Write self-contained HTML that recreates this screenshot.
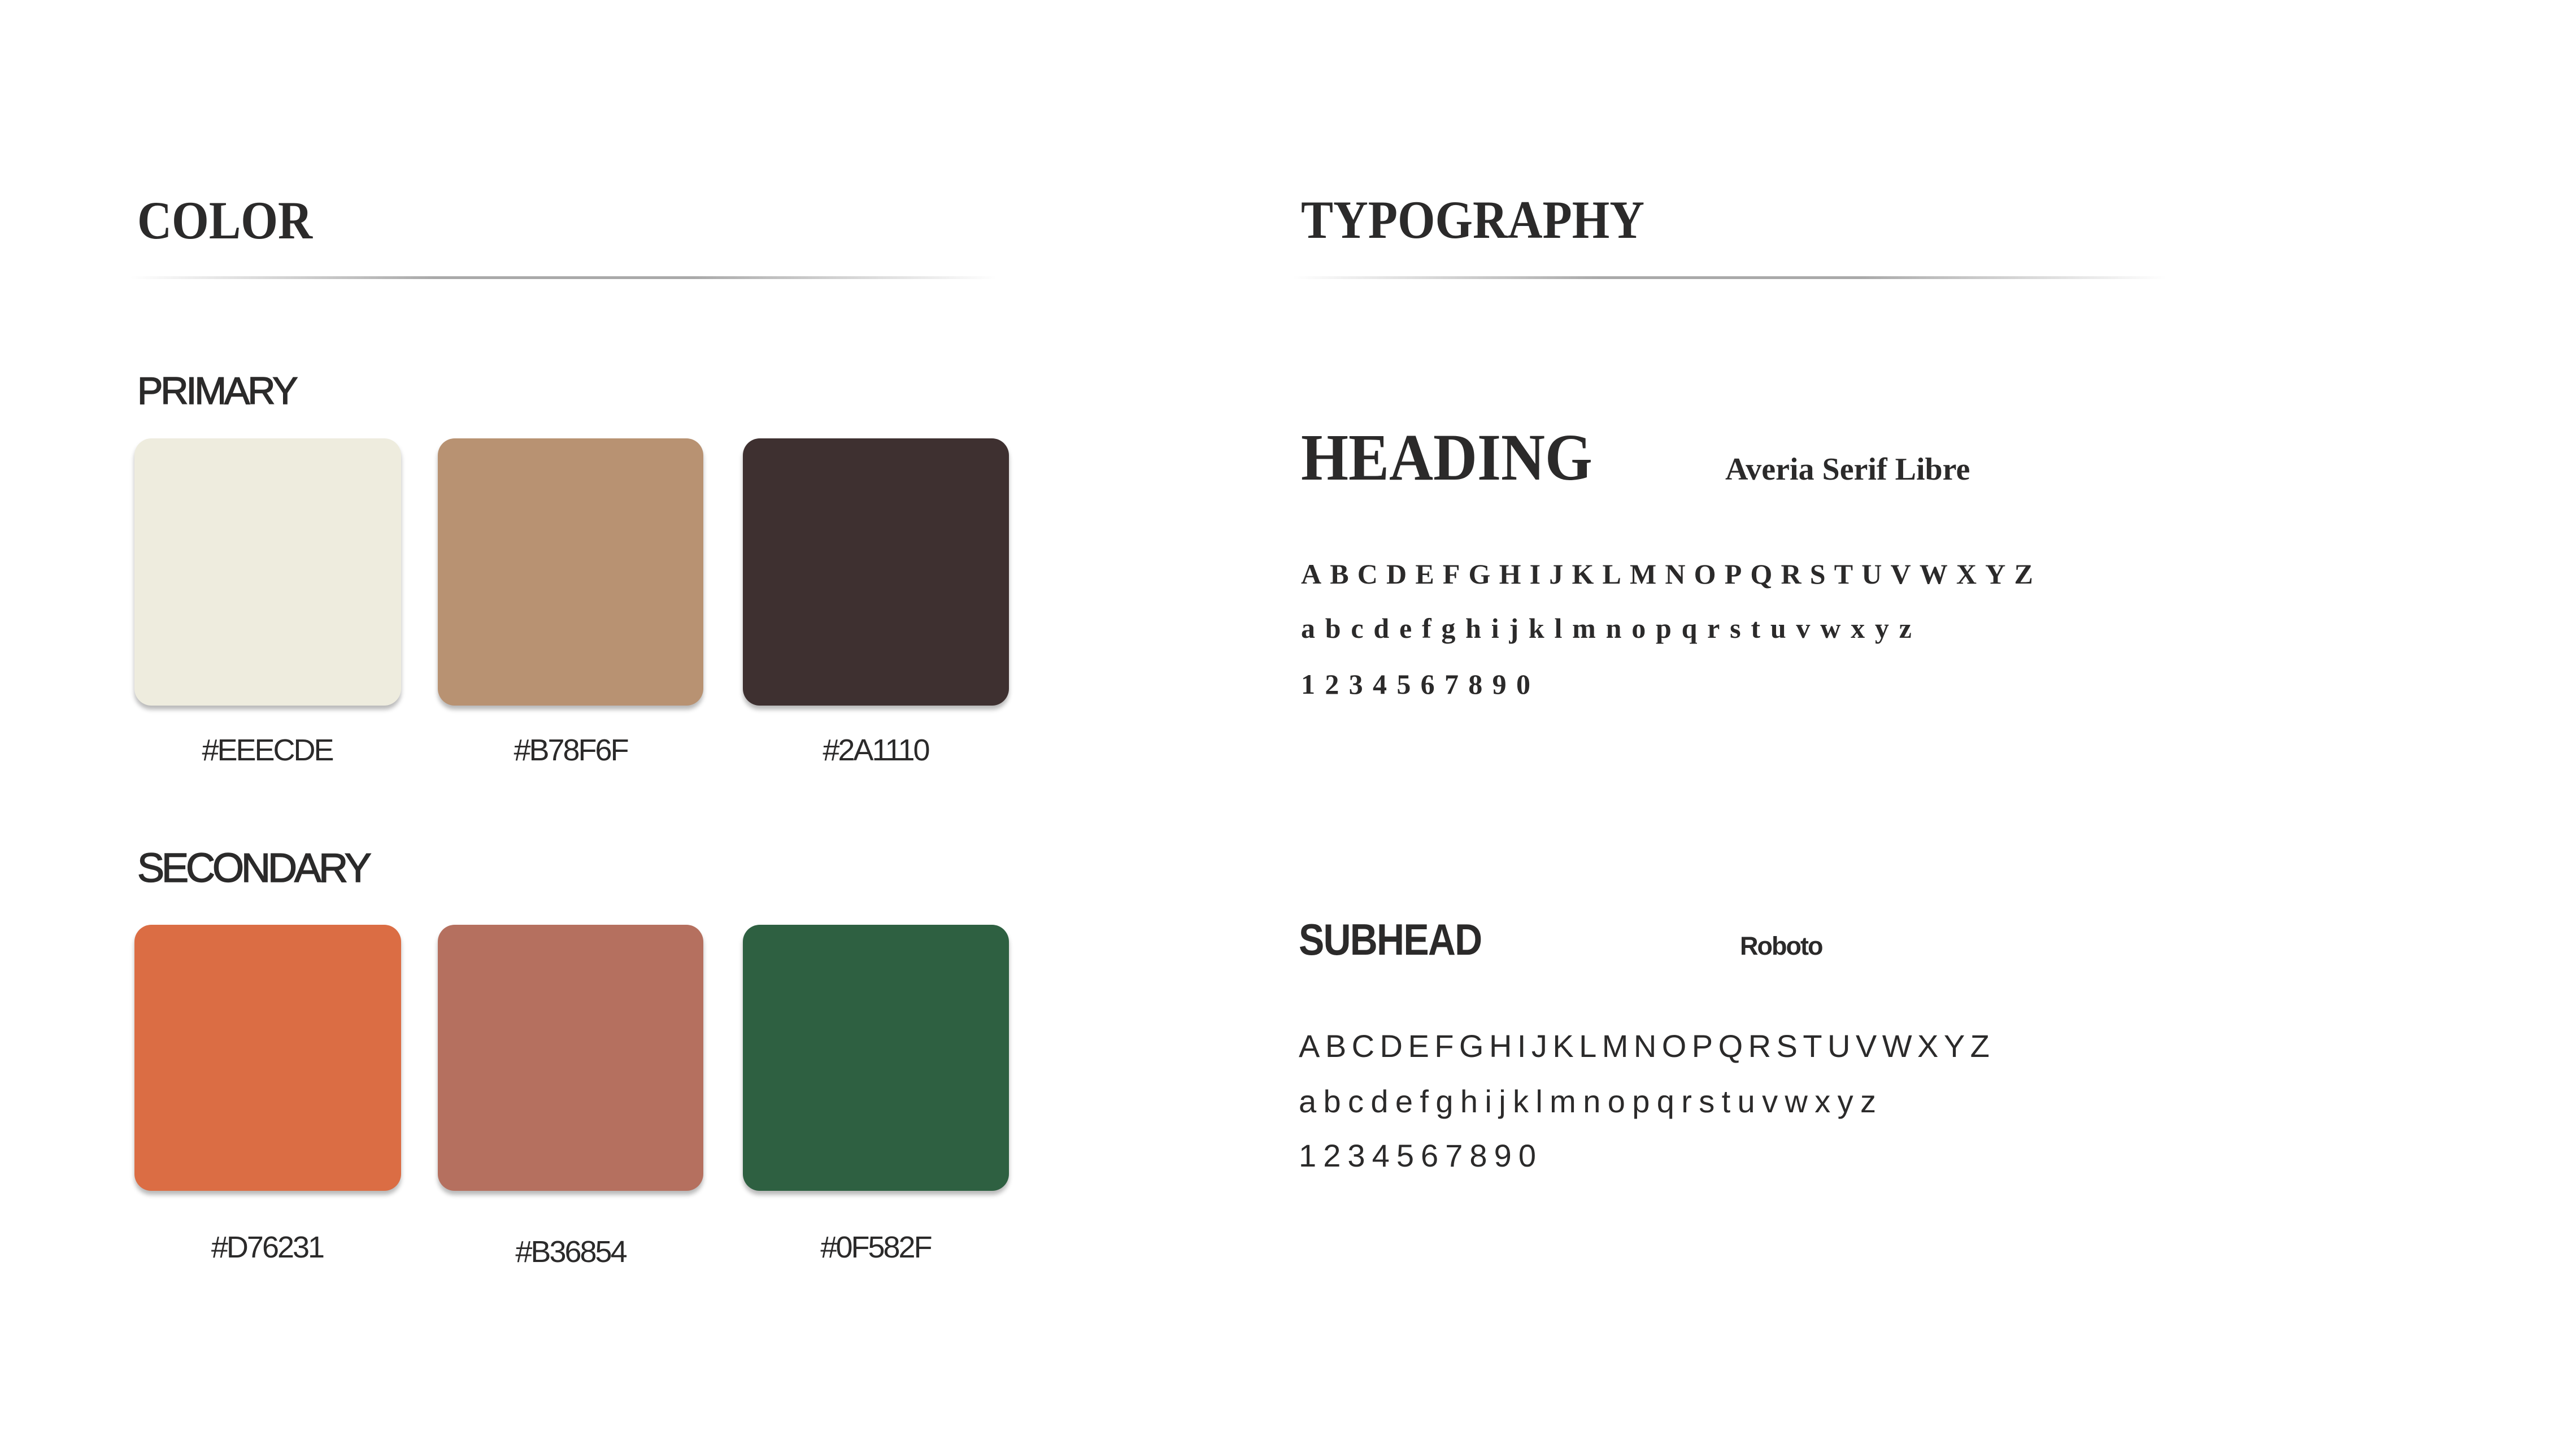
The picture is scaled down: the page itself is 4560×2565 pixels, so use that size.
<!DOCTYPE html>
<html><head><meta charset="utf-8"><style>
*{margin:0;padding:0;box-sizing:border-box}
body{width:4560px;height:2565px;background:#fff;position:relative;overflow:hidden;color:#2b2a2a}
.a{position:absolute;white-space:nowrap;line-height:1}
.serif{font-family:"Liberation Serif",serif}
.sans{font-family:"Liberation Sans",sans-serif}
.sw{position:absolute;border-radius:30px;box-shadow:0 7px 8px rgba(0,0,0,.28)}
.line{position:absolute;height:5px;background:linear-gradient(90deg,rgba(170,170,170,0),#a9a9a9 35%,#a9a9a9 65%,rgba(170,170,170,0));border-radius:3px}
.row{position:absolute;display:flex;justify-content:space-between;line-height:1;white-space:nowrap}
.lbl{position:absolute;width:474px;text-align:center;font-family:"Liberation Sans",sans-serif;font-size:54px;line-height:1;letter-spacing:-3px}
</style></head><body>

<div class="a serif" style="left:243px;top:343px;font-size:95px;font-weight:bold;transform:scaleX(.89);transform-origin:left">COLOR</div>
<div class="line" style="left:230px;top:489px;width:1535px"></div>
<div class="a sans" style="left:243px;top:658px;font-size:68px;letter-spacing:-4px;-webkit-text-stroke:1.5px #2b2a2a">PRIMARY</div>

<div class="sw" style="left:238px;top:776px;width:472px;height:473px;background:#EEECDE"></div>
<div class="sw" style="left:775px;top:776px;width:470px;height:473px;background:#B89272"></div>
<div class="sw" style="left:1315px;top:776px;width:471px;height:473px;background:#3E3030"></div>
<div class="lbl" style="left:236px;top:1301px">#EEECDE</div>
<div class="lbl" style="left:773px;top:1301px">#B78F6F</div>
<div class="lbl" style="left:1313px;top:1301px">#2A1110</div>

<div class="a sans" style="left:243px;top:1501px;font-size:72px;letter-spacing:-5px;-webkit-text-stroke:1.5px #2b2a2a">SECONDARY</div>
<div class="sw" style="left:238px;top:1637px;width:472px;height:471px;background:#DB6D44"></div>
<div class="sw" style="left:775px;top:1637px;width:470px;height:471px;background:#B5705F"></div>
<div class="sw" style="left:1315px;top:1637px;width:471px;height:471px;background:#2E6041"></div>
<div class="lbl" style="left:236px;top:2181px">#D76231</div>
<div class="lbl" style="left:773px;top:2189px">#B36854</div>
<div class="lbl" style="left:1313px;top:2181px">#0F582F</div>

<div class="a serif" style="left:2303px;top:342px;font-size:95px;font-weight:bold;transform:scaleX(.9);transform-origin:left">TYPOGRAPHY</div>
<div class="line" style="left:2288px;top:489px;width:1547px"></div>

<div class="a serif" style="left:2303px;top:751px;font-size:118px;font-weight:bold;transform:scaleX(.915);transform-origin:left">HEADING</div>
<div class="a serif" style="left:3054px;top:803px;font-size:56px;font-weight:bold">Averia Serif Libre</div>

<div class="row serif" style="left:2303px;top:991px;width:1296px;font-size:50px;font-weight:bold"><span>A</span><span>B</span><span>C</span><span>D</span><span>E</span><span>F</span><span>G</span><span>H</span><span>I</span><span>J</span><span>K</span><span>L</span><span>M</span><span>N</span><span>O</span><span>P</span><span>Q</span><span>R</span><span>S</span><span>T</span><span>U</span><span>V</span><span>W</span><span>X</span><span>Y</span><span>Z</span></div>
<div class="row serif" style="left:2303px;top:1087px;width:1081px;font-size:50px;font-weight:bold"><span>a</span><span>b</span><span>c</span><span>d</span><span>e</span><span>f</span><span>g</span><span>h</span><span>i</span><span>j</span><span>k</span><span>l</span><span>m</span><span>n</span><span>o</span><span>p</span><span>q</span><span>r</span><span>s</span><span>t</span><span>u</span><span>v</span><span>w</span><span>x</span><span>y</span><span>z</span></div>
<div class="row serif" style="left:2303px;top:1186px;width:406px;font-size:50px;font-weight:bold"><span>1</span><span>2</span><span>3</span><span>4</span><span>5</span><span>6</span><span>7</span><span>8</span><span>9</span><span>0</span></div>

<div class="a sans" style="left:2299px;top:1624px;font-size:78px;font-weight:bold;letter-spacing:-2px;transform:scaleX(.87);transform-origin:left">SUBHEAD</div>
<div class="a sans" style="left:3080px;top:1652px;font-size:45px;font-weight:bold;letter-spacing:-2px">Roboto</div>

<div class="row sans" style="left:2299px;top:1824px;width:1223px;font-size:56px"><span>A</span><span>B</span><span>C</span><span>D</span><span>E</span><span>F</span><span>G</span><span>H</span><span>I</span><span>J</span><span>K</span><span>L</span><span>M</span><span>N</span><span>O</span><span>P</span><span>Q</span><span>R</span><span>S</span><span>T</span><span>U</span><span>V</span><span>W</span><span>X</span><span>Y</span><span>Z</span></div>
<div class="row sans" style="left:2299px;top:1922px;width:1022px;font-size:56px"><span>a</span><span>b</span><span>c</span><span>d</span><span>e</span><span>f</span><span>g</span><span>h</span><span>i</span><span>j</span><span>k</span><span>l</span><span>m</span><span>n</span><span>o</span><span>p</span><span>q</span><span>r</span><span>s</span><span>t</span><span>u</span><span>v</span><span>w</span><span>x</span><span>y</span><span>z</span></div>
<div class="row sans" style="left:2299px;top:2018px;width:420px;font-size:56px"><span>1</span><span>2</span><span>3</span><span>4</span><span>5</span><span>6</span><span>7</span><span>8</span><span>9</span><span>0</span></div>

</body></html>
